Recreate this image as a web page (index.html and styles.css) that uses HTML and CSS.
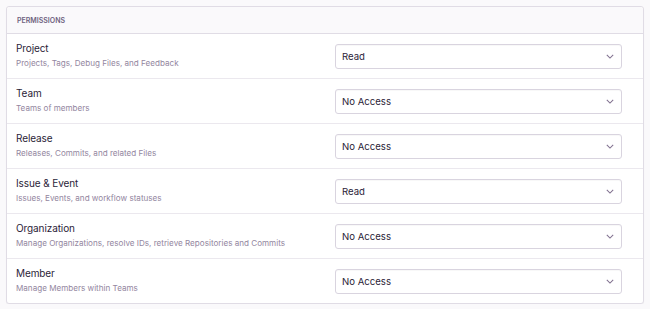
FILE: index.html
```html
<!DOCTYPE html>
<html>
<head>
<meta charset="utf-8">
<link rel="stylesheet" href="styles.css">
</head>
<body>
<div class="panel">
  <div class="panel-header">Permissions</div>
  <div class="row">
    <div class="label"><div class="title">Project</div><div class="desc">Projects, Tags, Debug Files, and Feedback</div></div>
    <div class="select"><span>Read</span><svg class="chev" viewBox="0 0 10 6"><path d="M1 1l4 4 4-4"/></svg></div>
  </div>
  <div class="row">
    <div class="label"><div class="title">Team</div><div class="desc">Teams of members</div></div>
    <div class="select"><span>No Access</span><svg class="chev" viewBox="0 0 10 6"><path d="M1 1l4 4 4-4"/></svg></div>
  </div>
  <div class="row">
    <div class="label"><div class="title">Release</div><div class="desc">Releases, Commits, and related Files</div></div>
    <div class="select"><span>No Access</span><svg class="chev" viewBox="0 0 10 6"><path d="M1 1l4 4 4-4"/></svg></div>
  </div>
  <div class="row">
    <div class="label"><div class="title">Issue &amp; Event</div><div class="desc">Issues, Events, and workflow statuses</div></div>
    <div class="select"><span>Read</span><svg class="chev" viewBox="0 0 10 6"><path d="M1 1l4 4 4-4"/></svg></div>
  </div>
  <div class="row">
    <div class="label"><div class="title">Organization</div><div class="desc">Manage Organizations, resolve IDs, retrieve Repositories and Commits</div></div>
    <div class="select"><span>No Access</span><svg class="chev" viewBox="0 0 10 6"><path d="M1 1l4 4 4-4"/></svg></div>
  </div>
  <div class="row">
    <div class="label"><div class="title">Member</div><div class="desc">Manage Members within Teams</div></div>
    <div class="select"><span>No Access</span><svg class="chev" viewBox="0 0 10 6"><path d="M1 1l4 4 4-4"/></svg></div>
  </div>
</div>
</body>
</html>
```
FILE: styles.css
```css
html, body { margin: 0; padding: 0; }
body {
  background: #faf9fb;
  font-family: "Inter", "Noto Sans", sans-serif;
  color: #2b1d38;
  padding: 6px 6px 0 6px;
}
.panel {
  background: #fff;
  border: 1px solid #e0dce5;
  border-radius: 3px;
  box-shadow: 0 1px 1px rgba(0,0,0,0.04);
}
.panel-header {
  height: 26px;
  display: flex;
  align-items: center;
  padding-left: 10px;
  background: #faf9fb;
  border-bottom: 1px solid #e0dce5;
  text-transform: uppercase;
  font-size: 7px;
  font-weight: 600;
  color: #6f6380;
  border-radius: 3px 3px 0 0;
}
.row {
  height: 44px;
  display: flex;
  align-items: center;
  padding-left: 9px;
  padding-right: 20px;
  border-bottom: 1px solid #ebe8ee;
}
.row:last-child { border-bottom: none; }
.label { flex: 1; padding-bottom: 2px; }
.title {
  font-size: 10px;
  letter-spacing: -0.1px;
  color: #2b1d38;
  line-height: 14px;
}
.desc {
  margin-top: 3px;
  font-size: 8.1px;
  color: #9386a0;
  line-height: 11px;
}
.select {
  width: 272px;
  height: 23px;
  border: 1px solid #d9d4df;
  border-radius: 3px;
  box-shadow: inset 0 1px 1px rgba(0,0,0,0.03);
  display: flex;
  align-items: center;
  justify-content: space-between;
  padding: 0 7px 0 6px;
  box-sizing: content-box;
  font-size: 9.6px;
  color: #2b1d38;
  margin-right: 1px;
}
.chev {
  width: 8px;
  height: 5px;
  fill: none;
  stroke: #80708f;
  stroke-width: 1.3;
}
```
